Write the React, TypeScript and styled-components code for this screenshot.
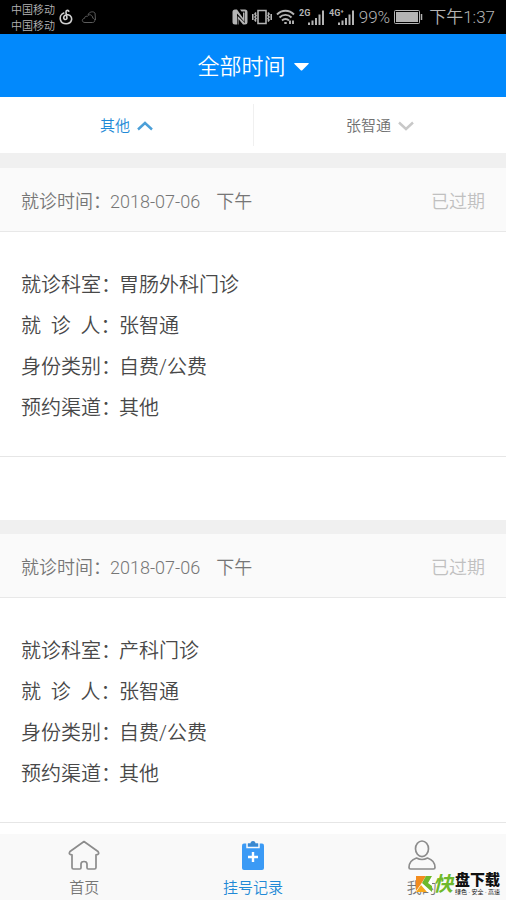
import React from "react";
import styled, { createGlobalStyle } from "styled-components";

const GlobalStyle = createGlobalStyle`
  * { box-sizing: border-box; }
  body {
    margin: 0;
    background: #fff;
    font-family: Roboto, "Noto Sans CJK SC", sans-serif;
    font-weight: 350;
    color: #484848;
  }
  button { border: 0; padding: 0; background: none; font: inherit; color: inherit; cursor: pointer; }
`;

const Screen = styled.div`
  display: flex;
  flex-direction: column;
  height: 100vh;
  overflow: hidden;
`;

const StatusBar = styled.div`
  display: flex;
  flex: none;
  align-items: center;
  justify-content: space-between;
  height: 34px;
  padding: 0 11px;
  background: #000;
  color: #b4b4b4;
`;

const StatusGroup = styled.div`
  display: flex;
  align-items: center;
  gap: 4px;
`;

const Carriers = styled.div`
  padding-top: 3px;
  font-size: 11px;
  line-height: 16px;
`;

const StatusText = styled.span`
  font-size: 17px;
  line-height: 24px;
  white-space: nowrap;
`;

const Clock = styled(StatusText)`
  padding-left: 2px;
`;

const Header = styled.header`
  display: flex;
  flex: none;
  align-items: center;
  justify-content: center;
  height: 63px;
  padding-top: 2px;
  background: #0289fc;
  color: #fff;
`;

const TitleButton = styled.button`
  display: flex;
  align-items: center;
  gap: 8px;
  font-size: 22px;
  line-height: 32px;
`;

const Filters = styled.div`
  display: grid;
  flex: none;
  grid-template-columns: 1fr 1fr;
  height: 56px;
  padding: 7px 0;
`;

const FilterButton = styled.button<{ $active?: boolean }>`
  display: flex;
  align-items: center;
  justify-content: center;
  gap: 7px;
  padding-top: 2px;
  font-size: 15px;
  line-height: 24px;
  color: ${(p) => (p.$active ? "#2189d6" : "#707070")};
  & + & { border-left: 1px solid #f0f0f0; }
`;

const Records = styled.main`
  display: flex;
  flex: 1;
  flex-direction: column;
  gap: 14px;
  min-height: 0;
  overflow: hidden;
  padding-top: 15px;
  background: #f0f0f0;
`;

const Card = styled.article`
  flex: none;
  background: #fff;
`;

const CardHead = styled.div`
  display: flex;
  align-items: center;
  justify-content: space-between;
  height: 64px;
  padding: 4px 21px 0;
  border-bottom: 1px solid #e8e8e8;
  background: #fafafa;
  font-size: 18px;
  line-height: 26px;
  color: #767676;
`;

const Visit = styled.div`
  display: flex;
`;

const DateLabel = styled.span`
  width: 89px;
  white-space: nowrap;
`;

const Period = styled.span`
  margin-left: 16px;
`;

const Expired = styled.span`
  color: #c0c0c0;
`;

const Fields = styled.dl`
  margin: 0;
  padding: 33px 21px 27px;
  border-bottom: 1px solid #e6e6e6;
  font-size: 20px;
  line-height: 41px;
`;

const Field = styled.div`
  display: flex;
`;

const Label = styled.dt`
  width: 98px;
  white-space: pre;
`;

const Value = styled.dd`
  margin: 0;
`;

const CardFoot = styled.div`
  height: 63px;
`;

const TabBar = styled.nav`
  position: relative;
  display: grid;
  flex: none;
  grid-template-columns: repeat(3, 1fr);
  height: 66px;
  background: #f9f9f9;
`;

const Tab = styled.a<{ $active?: boolean }>`
  display: flex;
  flex-direction: column;
  align-items: center;
  gap: 5px;
  padding-top: 6px;
  font-size: 15px;
  line-height: 22px;
  text-decoration: none;
  color: ${(p) => (p.$active ? "#2189d6" : "#767676")};
`;

const Watermark = styled.div`
  position: absolute;
  right: 6px;
  bottom: 4px;
  display: flex;
  align-items: center;
`;

const MarkLead = styled.span`
  font-size: 20px;
  line-height: 24px;
  font-weight: 700;
  font-style: italic;
  color: #6fb92c;
  text-shadow: 0 0 2px #fff;
`;

const MarkBody = styled.div`
  display: flex;
  flex-direction: column;
  align-items: center;
  margin-left: 2px;
  color: #111;
  text-shadow: 0 0 2px #fff;
`;

const MarkName = styled.span`
  font-size: 15px;
  line-height: 15px;
  font-weight: 900;
`;

const MarkNote = styled.span`
  font-size: 6px;
  line-height: 8px;
  font-weight: 400;
  white-space: nowrap;
`;

const Chevron = ({ up }: { up?: boolean }) => (
  <svg width="16" height="10" viewBox="0 0 16 10" fill="none" stroke={up ? "#4b9fd8" : "#c8c8c8"} strokeWidth="2.4">
    <path d={up ? "M1 8.500 8 2l7 6.500" : "M1 1.500 8 8l7-6.500"} />
  </svg>
);

const Signal = ({ label }: { label: string }) => (
  <svg width="26" height="18" viewBox="0 0 26 18" fill="#b4b4b4">
    <text x="0" y="8" fontSize="9" fontWeight="700" fontFamily="Roboto, sans-serif">{label}</text>
    <path d="M9 14.500h2V17H9zM12.500 12.500h2V17h-2zM16 10h2v7h-2zM19.500 6.500h2V17h-2zM23 2.500h2V17h-2z" />
  </svg>
);

const records = [
  { date: "2018-07-06", period: "下午", department: "胃肠外科门诊" },
  { date: "2018-07-06", period: "下午", department: "产科门诊" },
];

const Record = ({ date, period, department }: (typeof records)[number]) => {
  const fields = [
    ["就诊科室：", department],
    ["就  诊  人：", "张智通"],
    ["身份类别：", "自费/公费"],
    ["预约渠道：", "其他"],
  ];
  return (
    <Card>
      <CardHead>
        <Visit>
          <DateLabel>就诊时间：</DateLabel>
          <time>{date}</time>
          <Period>{period}</Period>
        </Visit>
        <Expired>已过期</Expired>
      </CardHead>
      <Fields>
        {fields.map(([label, value]) => (
          <Field key={label}>
            <Label>{label}</Label>
            <Value>{value}</Value>
          </Field>
        ))}
      </Fields>
      <CardFoot />
    </Card>
  );
};

export default function App() {
  return (
    <Screen>
      <GlobalStyle />
      <StatusBar>
        <StatusGroup>
          <Carriers>
            <div>中国移动</div>
            <div>中国移动</div>
          </Carriers>
          <svg width="14" height="16" viewBox="0 0 14 16" fill="none" stroke="#d0d0d0" strokeWidth="1.6" strokeLinecap="round">
            <path d="M9.800 2.200C8.600.6 6.800 1.500 7 3.300l.9 5.400c.2 2.300-3.100 2.400-3.200.2C4.600 6.700 6.800 5.400 9 5.800c3 .6 4 3.200 3.500 5.200C11.200 16 3 16 1.500 11 .6 7.800 2.200 5 4.800 4" />
          </svg>
          <svg width="22" height="14" viewBox="-4 0 22 14" fill="none" stroke="#5c5c5c" strokeWidth="1">
            <path d="M4 12.500h7.500c3 0 3-4 .3-4.300C11.500 4.500 7.800 3.500 6.300 6.500 4.800 5.700 3.500 6.800 3.700 8.200.4 8.800.6 12.500 4 12.500zM7 5c1-3.500 5.500-4 7-2l.5 7" />
          </svg>
        </StatusGroup>
        <StatusGroup>
          <svg width="16" height="16" viewBox="0 0 16 16" fill="#b4b4b4">
            <path d="M3 .5h2L11 9V3.500h1.500V13L5 4.500V15.500H3q-2.500 0-2.500-2.500V3Q.5.5 3 .5z" />
            <path d="M8 .5h5q2.500 0 2.500 2.500v10q0 2.500-2.500 2.500h-2L6.500 10v5.500H5.700V7L13 14V2.500H9.500z" />
          </svg>
          <svg width="20" height="16" viewBox="0 0 20 16" fill="none" stroke="#b4b4b4" strokeWidth="1.600">
            <path d="M6 1.500h8v13H6zM4 3.500l-1 1.500 1 1.500-1 1.500 1 1.500-1 1.500 1 1.500M16 3.500l1 1.500-1 1.500 1 1.500-1 1.500 1 1.500-1 1.500M.8 5v6M19.200 5v6" />
          </svg>
          <svg width="19" height="16" viewBox="0 0 19 16" fill="none" stroke="#b4b4b4" strokeWidth="1.900">
            <path d="M1 5.500c5-5 12-5 17 0M3.500 8.500c3.500-3.500 8.500-3.500 12 0M6 11.500c2-2 5-2 7 0" />
            <path d="M8.300 14h2.400M14 11.500V15M17 11.500V15" />
          </svg>
          <Signal label="2G" />
          <Signal label="4G⁺" />
          <StatusText>99%</StatusText>
          <svg width="29" height="14" viewBox="0 0 29 14" fill="none" stroke="#b4b4b4">
            <rect x=".5" y=".5" width="25" height="13" rx="1" />
            <path d="M2 2h22v10H2z" fill="#b4b4b4" stroke="none" />
            <path d="M27.500 4v6" strokeWidth="1.500" />
          </svg>
          <Clock>下午1:37</Clock>
        </StatusGroup>
      </StatusBar>
      <Header>
        <TitleButton>
          全部时间
          <svg width="15" height="8" viewBox="0 0 15 8" fill="#fff">
            <path d="M1 0h13q1.500 0 .5 1L8.500 7q-1 1-2 0L.5 1Q-.5 0 1 0z" />
          </svg>
        </TitleButton>
      </Header>
      <Filters>
        <FilterButton $active>
          其他
          <Chevron up />
        </FilterButton>
        <FilterButton>
          张智通
          <Chevron />
        </FilterButton>
      </Filters>
      <Records>
        {records.map((r) => (
          <Record key={r.department} {...r} />
        ))}
      </Records>
      <TabBar>
        <Tab href="#home">
          <svg width="32" height="32" viewBox="0 0 32 32" fill="none" stroke="#8c8c8c" strokeWidth="1.700" strokeLinejoin="round">
            <path d="M16 1.500 2 11.500Q0 14.500 4 14.800V27.500q0 1.500 1.500 1.500h6.300q1.200 0 1.200-1.200V24q0-2.500 3-2.500t3 2.500v3.800q0 1.200 1.200 1.200h6.300q1.500 0 1.500-1.500V14.800q4-.3 2-3.300z" />
          </svg>
          首页
        </Tab>
        <Tab href="#records" $active>
          <svg width="32" height="32" viewBox="0 0 32 32">
            <path d="M7 3.500h18q2 0 2 2V28q0 2-2 2H7q-2 0-2-2V5.500q0-2 2-2z" fill="#3b9af5" />
            <path d="M10 2.500v5h12v-5" fill="none" stroke="#f9f9f9" strokeWidth="1.500" />
            <path d="M11 6.200V3.500h2.500a2.500 2.500 0 0 1 5 0H21v2.700z" fill="#3b88cf" />
            <path d="M16 12v10M11 17h10" stroke="#fff" strokeWidth="2.400" />
          </svg>
          挂号记录
        </Tab>
        <Tab href="#mine">
          <svg width="32" height="32" viewBox="0 0 32 32" fill="none" stroke="#8c8c8c" strokeWidth="1.700" strokeLinejoin="round">
            <ellipse cx="16" cy="8.800" rx="6.500" ry="7.800" />
            <path d="M10.500 18C6 19.500 3 22.500 3 27.500q0 1.500 1.500 1.500h23q1.500 0 1.500-1.500c0-5-3-8-7.500-9.500q-5.500 3-11 0z" />
          </svg>
          我的
        </Tab>
        <Watermark>
          <svg width="18" height="18" viewBox="0 0 18 18">
            <path d="M1 1h16v16H1z" fill="#fff" />
            <path d="M1 1h10L6 9l-5 7z" fill="#f28c1e" />
            <path d="M17 1h-6L7 8l10 9v-6l-4-3z" fill="#6fb92c" />
            <path d="m1 17 5-7 6 7z" fill="#f7a81c" />
          </svg>
          <MarkLead>快</MarkLead>
          <MarkBody>
            <MarkName>盘下载</MarkName>
            <MarkNote>绿色 · 安全 · 高速</MarkNote>
          </MarkBody>
        </Watermark>
      </TabBar>
    </Screen>
  );
}
